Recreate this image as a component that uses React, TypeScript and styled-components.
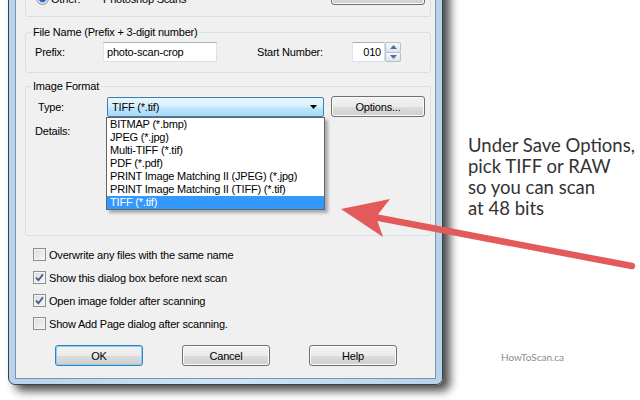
import React from "react";
import styled, { createGlobalStyle, css } from "styled-components";

const UI_FONT = `"Liberation Sans", Arial, sans-serif`;

const GlobalStyle = createGlobalStyle`
  html, body {
    margin: 0;
    padding: 0;
    background: #ffffff;
  }
  body {
    font-family: ${UI_FONT};
    font-size: 11px;
    color: #000;
  }
`;

const Page = styled.div`
  position: relative;
  display: flex;
  width: 640px;
  height: 400px;
  overflow: hidden;
  background: #ffffff;
`;

const Window = styled.div`
  flex: none;
  width: 435px;
  margin: -40px 0 0 8px;
  align-self: flex-start;
  box-sizing: border-box;
  padding: 6px 6px 5px 6px;
  border: 1px solid #3a4047;
  border-radius: 0 0 7px 7px;
  background: linear-gradient(90deg, #b8d2ec 0%, #cfe4f7 50%, #b8d2ec 100%);
  box-shadow: 7px 6px 10px rgba(0, 0, 0, 0.7);
`;

const Client = styled.div`
  display: flex;
  flex-direction: column;
  border: 1px solid #7c93ab;
  background: #f0f0f0;
  padding-bottom: 12px;
  font-family: ${UI_FONT};
  font-size: 11px;
  letter-spacing: -0.2px;
`;

const TopGroup = styled.div`
  height: 49px;
  box-sizing: border-box;
  margin: 0 4px 0 9px;
  padding: 0 5px 11px 10px;
  border: 1px solid #d5dfe5;
  border-top: none;
  border-radius: 0 0 3px 3px;
  display: flex;
  align-items: flex-end;
  justify-content: space-between;
`;

const Group = styled.fieldset<{ $top: number }>`
  margin: ${(p) => p.$top}px 4px 0 9px;
  padding: 0;
  border: 1px solid #d5dfe5;
  border-radius: 3px;
  min-width: 0;
`;

const Legend = styled.legend`
  margin-left: 5px;
  padding: 0 2px;
  line-height: 14px;
  font-size: 11px;
`;

const GroupBody = styled.div<{ $height?: number }>`
  box-sizing: border-box;
  padding: 3px 0 10px 9px;
  ${(p) =>
    p.$height &&
    css`
      height: ${p.$height}px;
    `}
`;

const Row = styled.div<{ $gapTop?: number }>`
  display: flex;
  align-items: center;
  margin-top: ${(p) => p.$gapTop ?? 0}px;
`;

const Label = styled.span<{ $width?: number; $indent?: number }>`
  flex: none;
  box-sizing: border-box;
  width: ${(p) => (p.$width ? `${p.$width}px` : "auto")};
  padding-left: ${(p) => p.$indent ?? 0}px;
  line-height: 14px;
  white-space: nowrap;
`;

const TextBox = styled.input<{ $width: number; $right?: boolean }>`
  box-sizing: border-box;
  width: ${(p) => p.$width}px;
  height: 20px;
  margin: 0;
  padding: 0 3px;
  border: 1px solid #dbdfe6;
  border-top-color: #abadb3;
  border-left-color: #e2e3ea;
  background: #fff;
  font-family: ${UI_FONT};
  font-size: 11px;
  letter-spacing: -0.2px;
  color: #000;
  text-align: ${(p) => (p.$right ? "right" : "left")};
  outline: none;
`;

const Spin = styled.div`
  display: flex;
  flex-direction: column;
  width: 16px;
  height: 20px;
`;

const SpinHalf = styled.div`
  flex: 1;
  display: flex;
  align-items: center;
  justify-content: center;
  border: 1px solid #b7bfc9;
  border-radius: 2px;
  background: linear-gradient(#f6f8fa, #dde3ea);
  & + & {
    margin-top: -1px;
  }
`;

const ComboWrap = styled.div`
  position: relative;
  flex: none;
  margin-right: 7px;
`;

const Combo = styled.div`
  box-sizing: border-box;
  width: 217px;
  height: 20px;
  display: flex;
  align-items: center;
  justify-content: space-between;
  padding: 0 6px 0 4px;
  border: 1px solid #3c7fb1;
  border-radius: 2px;
  background: linear-gradient(#eaf6fd 0%, #d9f0fc 45%, #bee6fd 55%, #a7d9f5 100%);
`;

const DropList = styled.ul`
  position: absolute;
  top: 100%;
  left: -1px;
  z-index: 1;
  width: 219px;
  box-sizing: border-box;
  margin: 0;
  padding: 0;
  list-style: none;
  background: #fff;
  border: 1px solid #646464;
  box-shadow: 3px 3px 3px rgba(0, 0, 0, 0.3);
`;

const DropItem = styled.li<{ $selected?: boolean }>`
  height: 13px;
  line-height: 13px;
  padding-left: 3px;
  white-space: nowrap;
  background: ${(p) => (p.$selected ? "#3399ff" : "transparent")};
  color: ${(p) => (p.$selected ? "#fff" : "#000")};
`;

const Button = styled.button<{ $width: number; $default?: boolean }>`
  flex: none;
  box-sizing: border-box;
  width: ${(p) => p.$width}px;
  height: 21px;
  margin: 0;
  padding: 0;
  border: 1px solid ${(p) => (p.$default ? "#3c7fb1" : "#707070")};
  border-radius: 3px;
  background: linear-gradient(#f2f2f2 0%, #ebebeb 50%, #dddddd 51%, #cfcfcf 100%);
  box-shadow: inset 0 0 0 1px ${(p) => (p.$default ? "#7fd3f7" : "#fbfbfb")};
  font-family: ${UI_FONT};
  font-size: 11px;
  letter-spacing: -0.2px;
  color: #000;
`;

const RadioLine = styled.div`
  display: flex;
  align-items: center;
  height: 13px;
`;

const RadioDot = styled.span`
  width: 13px;
  height: 13px;
  box-sizing: border-box;
  border-radius: 50%;
  border: 1px solid #8f8f8f;
  background: radial-gradient(circle, #2a5fc7 0 3px, #9ec0ec 4px, #e8eef6 5px);
  margin-right: 2px;
`;

const Checks = styled.div`
  display: flex;
  flex-direction: column;
  margin-top: 7px;
  padding-left: 17px;
`;

const CheckRow = styled.label`
  display: flex;
  align-items: center;
  height: 23px;
`;

const CheckBox = styled.span`
  flex: none;
  width: 13px;
  height: 13px;
  box-sizing: border-box;
  border: 1px solid #8e8f8f;
  background: linear-gradient(135deg, #dcdcdc, #f6f6f6);
  box-shadow: inset 0 0 0 1px #f4f4f4;
  margin-right: 3px;
  display: flex;
  align-items: center;
  justify-content: center;
`;

const ButtonBar = styled.div`
  display: flex;
  gap: 39px;
  margin-top: 10px;
  padding-left: 39px;
`;

const Side = styled.div`
  display: flex;
  flex-direction: column;
  padding: 135px 0 0 25px;
`;

const Note = styled.p`
  margin: 0;
  font-family: Lato, "Open Sans", sans-serif;
  font-size: 18.5px;
  line-height: 21px;
  color: #333;
`;

const Credit = styled.span`
  margin: 131px 0 0 33px;
  font-family: Lato, "Open Sans", sans-serif;
  font-size: 10px;
  line-height: 14px;
  color: #8c8c8c;
`;

const Overlay = styled.svg`
  position: absolute;
  left: 0;
  top: 0;
  z-index: 2;
  pointer-events: none;
`;

const formats = [
  "BITMAP (*.bmp)",
  "JPEG (*.jpg)",
  "Multi-TIFF (*.tif)",
  "PDF (*.pdf)",
  "PRINT Image Matching II (JPEG) (*.jpg)",
  "PRINT Image Matching II (TIFF) (*.tif)",
  "TIFF (*.tif)",
];

const options = [
  { text: "Overwrite any files with the same name", checked: false },
  { text: "Show this dialog box before next scan", checked: true },
  { text: "Open image folder after scanning", checked: true },
  { text: "Show Add Page dialog after scanning.", checked: false },
];

const Tick = () => (
  <svg width="9" height="9" viewBox="0 0 9 9">
    <path d="M1 4.6 L3.4 7.2 L8 1.4" fill="none" stroke="#3f5592" strokeWidth="1.7" />
  </svg>
);

const SpinArrow = ({ up }: { up?: boolean }) => (
  <svg width="7" height="4" viewBox="0 0 7 4">
    <polygon points={up ? "0,4 7,4 3.5,0" : "0,0 7,0 3.5,4"} fill="#4d6ea8" />
  </svg>
);

const App: React.FC = () => {
  return (
    <Page>
      <GlobalStyle />
      <Window>
        <Client>
          <TopGroup>
            <RadioLine>
              <RadioDot />
              <Label $width={52}>Other:</Label>
              <Label>Photoshop Scans</Label>
            </RadioLine>
            <Button $width={94}>Browse...</Button>
          </TopGroup>

          <Group $top={8}>
            <Legend>File Name (Prefix + 3-digit number)</Legend>
            <GroupBody>
              <Row>
                <Label $width={68}>Prefix:</Label>
                <TextBox $width={114} readOnly value="photo-scan-crop" />
                <Label $width={135} $indent={40}>Start Number:</Label>
                <TextBox $width={33} $right readOnly value="010" />
                <Spin>
                  <SpinHalf>
                    <SpinArrow up />
                  </SpinHalf>
                  <SpinHalf>
                    <SpinArrow />
                  </SpinHalf>
                </Spin>
              </Row>
            </GroupBody>
          </Group>

          <Group $top={6}>
            <Legend>Image Format</Legend>
            <GroupBody $height={142}>
              <Row>
                <Label $width={72} $indent={3}>Type:</Label>
                <ComboWrap>
                  <Combo>
                    <span>TIFF (*.tif)</span>
                    <svg width="7" height="4" viewBox="0 0 7 4">
                      <polygon points="0,0 7,0 3.5,4" fill="#000" />
                    </svg>
                  </Combo>
                  <DropList>
                    {formats.map((f, i) => (
                      <DropItem key={f} $selected={i === formats.length - 1}>
                        {f}
                      </DropItem>
                    ))}
                  </DropList>
                </ComboWrap>
                <Button $width={94}>Options...</Button>
              </Row>
              <Row $gapTop={7}>
                <Label>Details:</Label>
              </Row>
            </GroupBody>
          </Group>

          <Checks>
            {options.map((o) => (
              <CheckRow key={o.text}>
                <CheckBox>{o.checked && <Tick />}</CheckBox>
                <Label>{o.text}</Label>
              </CheckRow>
            ))}
          </Checks>

          <ButtonBar>
            <Button $width={88} $default>
              OK
            </Button>
            <Button $width={88}>Cancel</Button>
            <Button $width={88}>Help</Button>
          </ButtonBar>
        </Client>
      </Window>

      <Side>
        <Note>
          Under Save Options,
          <br />
          pick TIFF or RAW
          <br />
          so you can scan
          <br />
          at 48 bits
        </Note>
        <Credit>HowToScan.ca</Credit>
      </Side>

      <Overlay width="640" height="400" viewBox="0 0 640 400">
        <line x1="374" y1="217" x2="632" y2="266" stroke="#e25a5a" strokeWidth="6.5" strokeLinecap="round" />
        <polygon points="341,209 390,199 376,217 383,237" fill="#e25a5a" />
      </Overlay>
    </Page>
  );
};

export default App;
